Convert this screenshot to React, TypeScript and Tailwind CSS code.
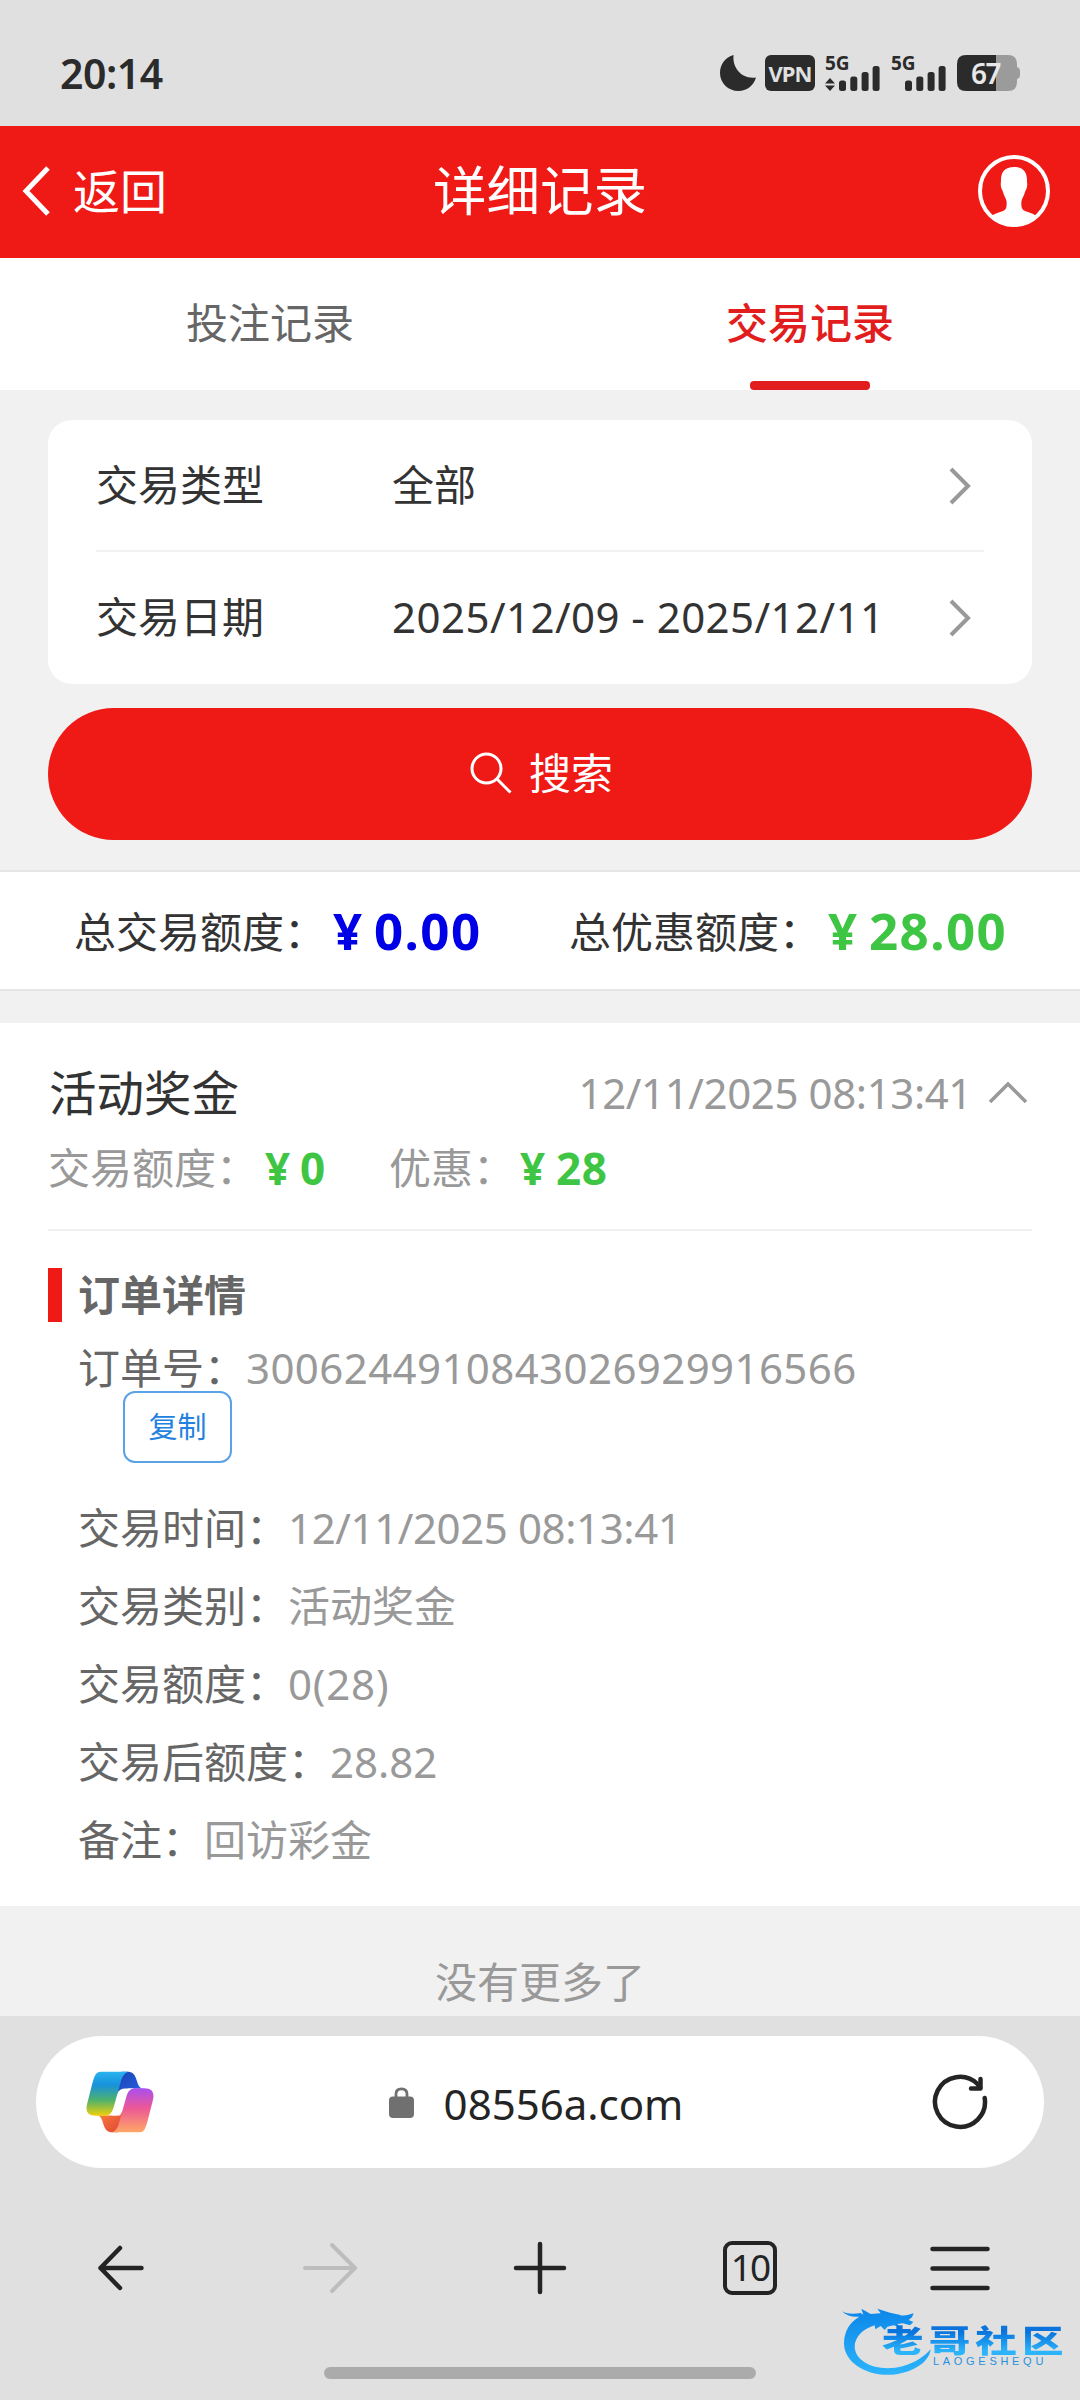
import type { ReactNode } from "react";

interface DetailRow {
  label: string;
  value: string;
}

const details: DetailRow[] = [
  { label: "交易时间", value: "12/11/2025 08:13:41" },
  { label: "交易类别", value: "活动奖金" },
  { label: "交易额度", value: "0(28)" },
  { label: "交易后额度", value: "28.82" },
  { label: "备注", value: "回访彩金" },
];

function SignalBars() {
  return (
    <svg width="41" height="25" viewBox="0 0 41 25" fill="#2b2b2b">
      <rect x="0" y="14.5" width="7" height="10.5" rx="2.5" />
      <rect x="11.3" y="10.5" width="7" height="14.5" rx="2.5" />
      <rect x="22.6" y="6" width="7" height="19" rx="2.5" />
      <rect x="33.6" y="0" width="7" height="25" rx="2.5" />
    </svg>
  );
}

function StatusBar() {
  return (
    <div className="flex h-[126px] items-start justify-between bg-[#e0e0e0] pl-[60px] pr-[60px] text-[#2b2b2b]">
      <span className="mt-[48px] font-['Noto_Sans'] text-[41px] font-semibold leading-[50px] tracking-[-0.5px]">
        20:14
      </span>
      <div className="mt-[55px] flex h-9">
        <svg width="36" height="36" viewBox="0 0 36 36" fill="#2b2b2b">
          <path d="M13.6 0C12 12 21 24.500 36 22.500C33.500 31 26.500 36 18.500 36C8 36 0 28 0 18C0 9 5.500 2 13.600 0Z" />
        </svg>
        <div className="ml-[9px] flex h-9 w-[50px] items-center justify-center rounded-[6px] bg-[#2b2b2b] font-['Noto_Sans'] text-[22px] font-bold tracking-[-0.9px] text-[#e0e0e0]">
          VPN
        </div>
        {/* 主卡信号 */}
        <div className="relative ml-[10px] h-9 w-[55px]">
          <span className="absolute left-0 -top-[1px] font-['Noto_Sans'] text-[19px] font-bold leading-[18px]">5G</span>
          <svg className="absolute bottom-0 left-0" width="10" height="13" viewBox="0 0 10 13" fill="#2b2b2b">
            <path d="M5 0L10 5.500H0ZM0 7.500H10L5 13Z" />
          </svg>
          <div className="absolute bottom-0 left-[14px]">
            <SignalBars />
          </div>
        </div>
        {/* 副卡信号 */}
        <div className="relative ml-[11px] h-9 w-[55px]">
          <span className="absolute left-0 -top-[1px] font-['Noto_Sans'] text-[19px] font-bold leading-[18px]">5G</span>
          <div className="absolute bottom-0 left-[14px]">
            <SignalBars />
          </div>
        </div>
        <div className="relative ml-[11px] h-9 w-[63px]">
          <svg width="63" height="36" viewBox="0 0 63 36">
            <path d="M39 0H51Q60 0 60 9V12Q63 13 63 16V20Q63 23 60 24V27Q60 36 51 36H39Z" fill="#9b9b9b" />
            <path d="M9 0H39V36H9Q0 36 0 27V9Q0 0 9 0Z" fill="#2b2b2b" />
          </svg>
          <span className="absolute left-[14px] top-0 font-['Noto_Sans'] text-[28px] font-semibold leading-[36px] tracking-[-1.500px] text-[#e8e8e8]">
            67
          </span>
        </div>
      </div>
    </div>
  );
}

function Header() {
  return (
    <header className="grid h-[132px] grid-cols-3 items-center bg-[#ef1916] pb-[2px] text-white">
      <div className="flex items-center pl-[22px]">
        <svg width="29" height="50" viewBox="0 0 29 50" fill="none" stroke="#fff" strokeWidth="5">
          <path d="M26 2L4 25L26 48" />
        </svg>
        <span className="ml-[22px] text-[47px] leading-[60px]">返回</span>
      </div>
      <h1 className="text-center text-[53.500px] leading-[70px]">详细记录</h1>
      <svg className="mr-[30px] justify-self-end" width="72" height="72" viewBox="0 0 72 72">
        <circle cx="36" cy="36" r="34" fill="none" stroke="#fff" strokeWidth="4" />
        <path
          d="M36 12C45 12 49 17 49 25C49 28 49.500 29 49 32C48.500 34.500 47.500 35 47 37C46 41 44 43 43.500 46C43 51 43.500 54 46 55.500C50 57.500 55 58 58.500 61.500C53 68 45 71.500 36 71.500C27 71.500 19 68 13.500 61.500C17 58 22 57.500 26 55.500C28.500 54 29 51 28.500 46C28 43 26 41 25 37C24.500 35 23.500 34.500 23 32C22.500 29 23 28 23 25C23 17 27 12 36 12Z"
          fill="#fff"
        />
      </svg>
    </header>
  );
}

function Tabs() {
  return (
    <nav className="grid h-[132px] grid-cols-2 bg-white text-[42px] leading-[60px]">
      <div className="pt-[35px] text-center text-[#666]">投注记录</div>
      <div className="flex flex-col items-center justify-between pt-[35px] font-medium text-[#e11d1d]">
        交易记录
        <div className="h-[9px] w-[120px] rounded-[4px] bg-[#e11d1d]" />
      </div>
    </nav>
  );
}

function FilterRow({ label, children }: { label: string; children: ReactNode }) {
  return (
    <div className="flex h-[131px] items-center">
      <span className="w-[296px] pb-[2px]">{label}</span>
      <span className="flex-1 pb-[2px]">{children}</span>
      <svg className="mr-[12px]" width="24" height="38" viewBox="0 0 24 38" fill="none" stroke="#999" strokeWidth="4">
        <path d="M3 2L20 19L3 36" />
      </svg>
    </div>
  );
}

function Filters() {
  return (
    <section className="px-12 pb-[30px] pt-[30px]">
      <div className="h-[264px] rounded-[24px] bg-white pl-[48px] pr-[48px] text-[42px] leading-[60px] text-[#333]">
        <FilterRow label="交易类型">全部</FilterRow>
        <div className="-mt-px h-[2px] bg-[#f2f2f2]" />
        <FilterRow label="交易日期">
          <span className="tracking-[0.45px]">2025/12/09 - 2025/12/11</span>
        </FilterRow>
      </div>
      <button className="mt-6 flex h-[132px] w-full items-center justify-center rounded-full bg-[#ef1916] pb-[2px] pl-[3px] text-[42px] leading-[60px] text-white">
        <svg width="42" height="42" viewBox="0 0 42 42" fill="none" stroke="#fff" strokeWidth="3">
          <circle cx="16.500" cy="16.500" r="14.500" />
          <path d="M27 27L40.500 40.500" />
        </svg>
        <span className="ml-[17px]">搜索</span>
      </button>
    </section>
  );
}

function Summary() {
  return (
    <section className="flex h-[121px] items-center border-y-2 border-[#e6e6e6] bg-white text-[42px] leading-[60px] text-[#333]">
      <span className="ml-[74px] w-[259px] pt-[2px]">总交易额度：</span>
      <span className="flex w-[236px] pb-[2px] text-[51px] font-bold tracking-[1.400px] text-[#0000e6]">
        <span className="w-[41px]">¥</span>0.00
      </span>
      <span className="w-[259px] pt-[2px]">总优惠额度：</span>
      <span className="flex pb-[2px] text-[51px] font-bold tracking-[1.400px] text-[#3fc544]">
        <span className="w-[41px]">¥</span>28.00
      </span>
    </section>
  );
}

function RecordCard() {
  return (
    <section className="h-[883px] bg-white px-12 pt-[35px] text-[42px] leading-[60px] text-[#999]">
      <div className="flex h-[70px] items-center justify-between">
        <span className="pl-px text-[47.500px] text-[#333]">活动奖金</span>
        <div className="flex items-center tracking-[-0.4px]">
          12/11/2025 08:13:41
          <svg className="ml-[16px] mr-[4px]" width="40" height="24" viewBox="0 0 40 24" fill="none" stroke="#999" strokeWidth="3.500">
            <path d="M2 21L20 3L38 21" />
          </svg>
        </div>
      </div>
      <div className="mt-[10px] flex h-[60px] items-center">
        <span className="w-[217px]">交易额度：</span>
        <span className="flex w-[124px] text-[44px] font-bold tracking-[0.5px] text-[#3fc544]">
          <span className="w-[35px]">¥</span>0
        </span>
        <span className="w-[131px]">优惠：</span>
        <span className="flex text-[44px] font-bold tracking-[0.5px] text-[#3fc544]">
          <span className="w-[36px]">¥</span>28
        </span>
      </div>
      <div className="mt-[31px] h-[2px] bg-[#f0f0f0]" />
      <div className="mt-[37px] flex h-[54px] items-center border-l-[14px] border-[#ef1916] pl-[16px] font-bold text-[#666]">
        订单详情
      </div>
      <div className="mt-[16px] pl-[30px]">
        <div className="h-[53px]">
          <span className="text-[#666]">订单号：</span>
          <span className="tracking-[0.4px]">3006244910843026929916566</span>
        </div>
        <button className="ml-[45px] flex h-[72px] w-[109px] items-center justify-center rounded-[12px] border-2 border-[#5aa2e6] text-[29px] text-[#2382e0]">
          复制
        </button>
        <div className="mt-[26px]">
          {details.map((row) => (
            <div key={row.label} className="flex h-[78px] items-center">
              <span className="text-[#666]">{row.label}：</span>
              <span className={row.value.includes("/") ? "tracking-[-0.4px]" : row.value.includes("(") ? "tracking-[0.8px]" : ""}>
                {row.value}
              </span>
            </div>
          ))}
        </div>
      </div>
    </section>
  );
}

function CopilotIcon() {
  return (
    <svg width="68" height="62" viewBox="80 95 200 184">
      <defs>
        <linearGradient id="cool" x1="0" y1="0" x2="0" y2="1">
          <stop offset="0" stopColor="#2ab4ef" />
          <stop offset="0.3" stopColor="#1791dc" />
          <stop offset="0.65" stopColor="#50b36b" />
          <stop offset="1" stopColor="#f2cf08" />
        </linearGradient>
        <linearGradient id="blue" x1="0" y1="0" x2="1" y2="1">
          <stop offset="0" stopColor="#1b3fae" />
          <stop offset="1" stopColor="#2566e8" />
        </linearGradient>
        <linearGradient id="warm" x1="0" y1="0" x2="0" y2="1">
          <stop offset="0" stopColor="#a94ff0" />
          <stop offset="0.45" stopColor="#ec5896" />
          <stop offset="1" stopColor="#ffa765" />
        </linearGradient>
        <linearGradient id="orange" x1="0" y1="0" x2="1" y2="1">
          <stop offset="0" stopColor="#ff8a3d" />
          <stop offset="1" stopColor="#dd3f35" />
        </linearGradient>
      </defs>
      <path d="M185 97H202C222 97 226 110 232 130C236 142 240 147 252 147H200C182 147 176 151 168 170L160 150Z" fill="url(#blue)" />
      <path d="M175 277H158C138 277 134 264 128 244C124 232 120 227 108 227H160C178 227 184 223 192 204L200 224Z" fill="url(#orange)" />
      <path d="M203 147H220L180 227H155Z" fill="#fff" />
      <path d="M122 97H210C194 97 187 110 182 128L161 203C156 221 148 228 132 228H108C82 228 77 212 83 190L99 128C105 107 110 97 122 97Z" fill="url(#cool)" />
      <path d="M238 277H150C166 277 173 264 178 246L199 171C204 153 212 146 228 146H252C278 146 283 162 277 184L261 246C255 267 250 277 238 277Z" fill="url(#warm)" />
    </svg>
  );
}

function BrowserBar() {
  return (
    <footer className="relative h-[384px] bg-[#e0e0e0] pt-5">
      <div className="mx-9 grid h-[132px] grid-cols-[1fr_auto_1fr] items-center rounded-full bg-white pl-[50px] pr-[56px]">
        <CopilotIcon />
        <div className="-ml-[2px] flex items-center font-['Noto_Sans'] text-[42px] leading-[60px] text-[#242424]">
          <svg className="mr-[30px]" width="25" height="31" viewBox="0 0 25 31">
            <rect x="0" y="9.500" width="25" height="21.500" rx="4" fill="#707070" />
            <path d="M7 11V7Q7 1.800 12.500 1.800Q18 1.800 18 7V11" fill="none" stroke="#707070" strokeWidth="2.800" />
          </svg>
          <span className="pt-[4px]">08556a.com</span>
        </div>
        <svg className="justify-self-end" width="56" height="56" viewBox="0 0 56 56" fill="none" stroke="#242424" strokeWidth="4.500" strokeLinecap="round" strokeLinejoin="round">
          <path d="M52.700 24A25 25 0 1 1 45.500 10L48 13.500" />
          <path d="M48.500 5V14.500H39" />
        </svg>
      </div>
      <div className="mt-[66px] grid h-[68px] grid-cols-[240px_180px_240px_180px_240px] items-center justify-items-center">
        <svg width="48" height="48" viewBox="0 0 48 48" fill="none" stroke="#242424" strokeWidth="4.500" strokeLinecap="round" strokeLinejoin="round">
          <path d="M45.500 24H4.500M24 4L4.500 24L24 44" />
        </svg>
        <svg width="56" height="52" viewBox="0 0 56 52" fill="none" stroke="#bdbdbd" strokeWidth="4" strokeLinecap="round" strokeLinejoin="round">
          <path d="M3 26H53M30 3L53 26L30 49" />
        </svg>
        <svg width="54" height="54" viewBox="0 0 54 54" fill="none" stroke="#242424" strokeWidth="4.500" strokeLinecap="round">
          <path d="M27 3V51M3 27H51" />
        </svg>
        <div className="flex size-[54px] items-center justify-center rounded-[9px] border-[4.500px] border-[#242424] pb-[2px] font-['Noto_Sans'] text-[37px] leading-[46px] tracking-[-2px] text-[#242424]">
          10
        </div>
        <svg width="60" height="46" viewBox="0 0 60 46" fill="none" stroke="#242424" strokeWidth="4.500" strokeLinecap="round">
          <path d="M2.500 4H57.500M2.500 23.500H57.500M2.500 43H57.500" />
        </svg>
      </div>
      <div className="mx-auto mt-[65px] h-3 w-[432px] rounded-full bg-[#ababab]" />
      <Watermark />
    </footer>
  );
}

function Watermark() {
  return (
    <div className="absolute left-[840px] top-[286px] h-[80px] w-[230px]">
      <svg className="absolute left-0 top-0" width="96" height="74" viewBox="0 0 288 222">
        <defs>
          <linearGradient id="dragon" x1="0" y1="0" x2="0" y2="1">
            <stop offset="0" stopColor="#0b86ea" />
            <stop offset="1" stopColor="#2cb4fb" />
          </linearGradient>
        </defs>
        <path
          d="M6 28C26 38 42 36 62 33L70 38L64 20L92 36L122 34L112 20L150 32L178 38C192 44 206 38 221 34L216 46L206 54L220 60L210 70L188 64L172 66L182 76L160 70L142 74L134 84L122 72L106 82L104 70C66 82 44 106 44 136C48 186 120 212 190 192C228 182 254 162 272 142C268 180 222 208 174 216C90 230 12 186 12 124C12 88 30 60 58 44C38 46 20 42 6 28Z"
          fill="url(#dragon)"
        />
      </svg>
      <span className="absolute left-[42px] top-[22px] origin-left scale-x-[1.34] whitespace-nowrap bg-linear-to-b from-[#0a74dc] from-25% to-[#2cb4fb] to-85% bg-clip-text text-[31px] font-black leading-[32px] tracking-[3.800px] text-transparent">
        老哥社区
      </span>
      <span className="absolute left-[93px] top-[54px] font-['Liberation_Sans'] text-[11px] leading-[11px] tracking-[3.700px] text-[#2a90dd]">
        LAOGESHEQU
      </span>
    </div>
  );
}

export default function App() {
  return (
    <div className="h-[2400px] w-[1080px] overflow-hidden bg-[#f1f1f1] font-['Noto_Sans','Noto_Sans_CJK_SC',sans-serif]">
      <StatusBar />
      <Header />
      <Tabs />
      <Filters />
      <Summary />
      <div className="h-[32px]" />
      <RecordCard />
      <div className="h-[110px] pt-[46px] text-center text-[42px] leading-[60px] text-[#999]">没有更多了</div>
      <BrowserBar />
    </div>
  );
}
